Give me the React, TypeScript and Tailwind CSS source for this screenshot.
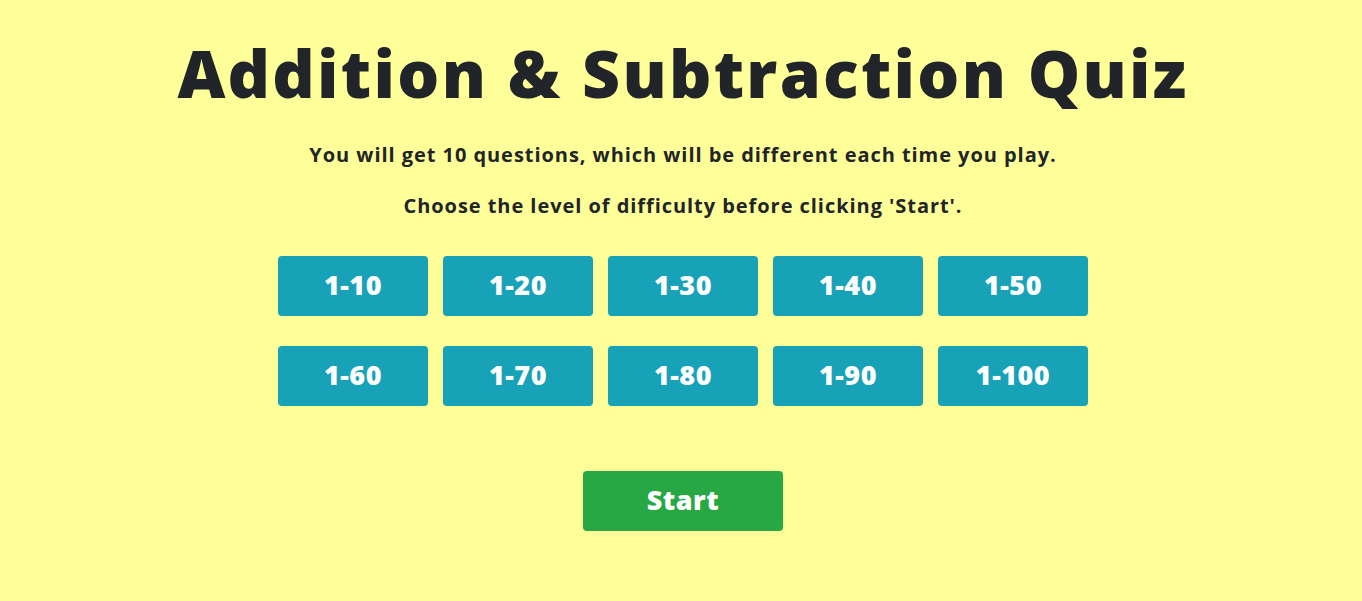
import React from "react";

const levels = ["1-10", "1-20", "1-30", "1-40", "1-50", "1-60", "1-70", "1-80", "1-90", "1-100"];

export default function App() {
  return (
    <div
      className="min-h-[601px] w-full bg-[#ffff99] text-[#212529] flex flex-col items-center pl-[4px]"
      style={{ fontFamily: '"Open Sans", "Noto Sans", sans-serif' }}
    >
      <h1 className="mt-[30px] h-[84px] flex items-center text-[66px] font-extrabold leading-none tracking-[2.3px]">
        Addition &amp; Subtraction Quiz
      </h1>
      <p className="mt-[26px] h-[30px] flex items-center text-[20px] font-bold tracking-[0.95px]">
        You will get 10 questions, which will be different each time you play.
      </p>
      <p className="mt-[21px] h-[30px] flex items-center text-[20px] font-bold tracking-[0.95px]">
        Choose the level of difficulty before clicking 'Start'.
      </p>
      <div className="mt-[35px] grid grid-cols-5 gap-x-[15px] gap-y-[30px]">
        {levels.map((l) => (
          <button
            key={l}
            className="w-[150px] h-[60px] rounded-[4px] bg-[#17a2b8] text-white text-[27px] font-extrabold flex items-center justify-center pb-[2px] tracking-[0.5px]"
          >
            {l}
          </button>
        ))}
      </div>
      <button className="mt-[65px] w-[200px] h-[60px] rounded-[4px] bg-[#28a745] text-white text-[27px] font-extrabold flex items-center justify-center pb-[2px] tracking-[0.5px]">
        Start
      </button>
    </div>
  );
}
